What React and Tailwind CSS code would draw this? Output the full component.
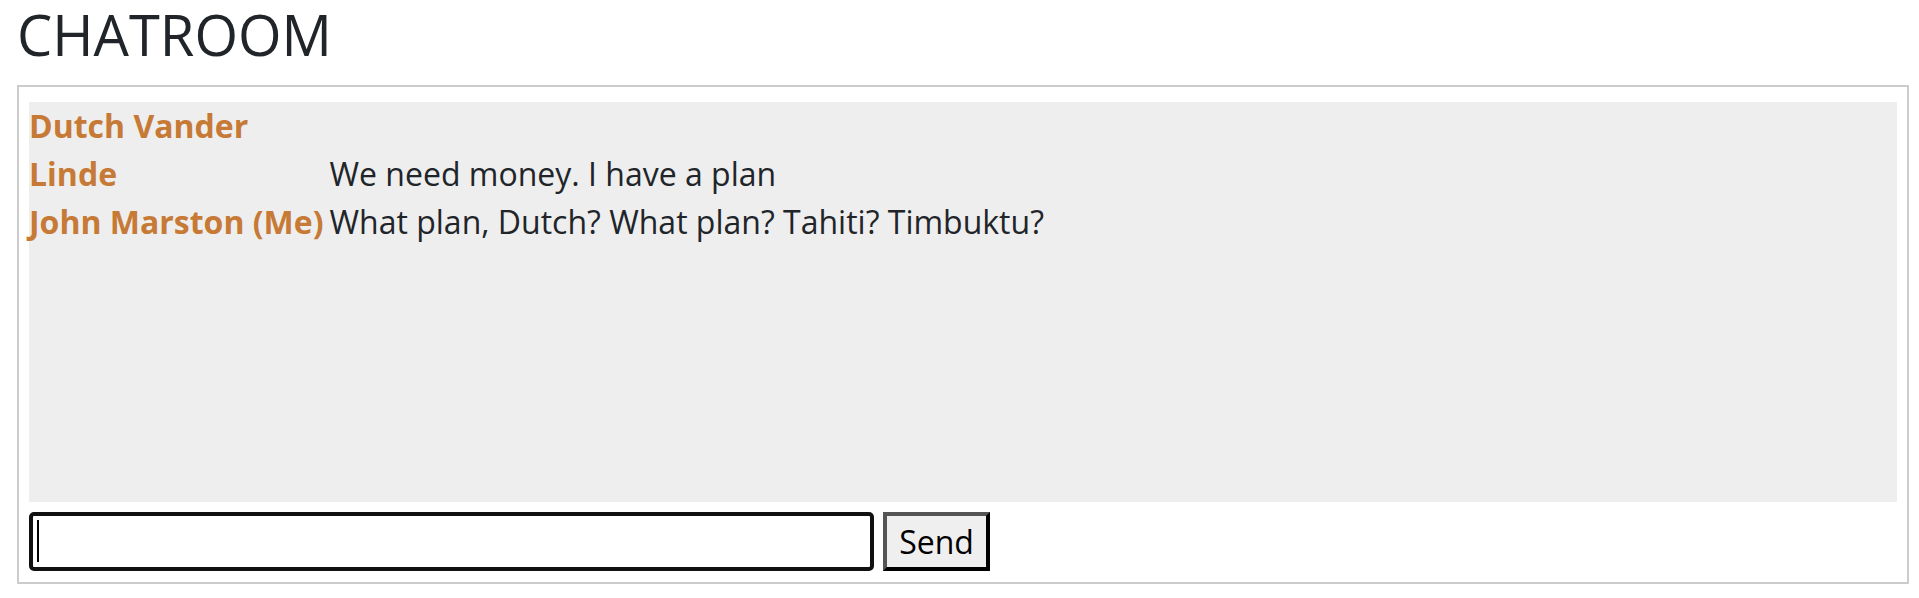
import React from "react";

const rows = [
  { name: "Dutch Vander", msg: "" },
  { name: "Linde", msg: "We need money. I have a plan" },
  { name: "John Marston (Me)", msg: "What plan, Dutch? What plan? Tahiti? Timbuktu?" },
];

export default function App() {
  return (
    <div className="min-h-[598px] bg-white pl-[17px] pr-[10px] font-['Open_Sans',sans-serif] text-[#212529]">
      <h1 className="m-0 pt-[1px] text-[56px] font-medium leading-[1.2] mb-[17px]">CHATROOM</h1>
      <div className="border-2 border-[#cccccc] px-[10px] pt-[15px] pb-[11px]">
        <div className="h-[400px] bg-[#eeeeee]">
          <div className="grid grid-cols-[auto_1fr] gap-x-[6px] text-[32px] leading-[48px]">
            {rows.map((r, i) => (
              <React.Fragment key={i}>
                <div className="font-bold text-[#c67a36] whitespace-nowrap">{r.name}</div>
                <div>{r.msg}</div>
              </React.Fragment>
            ))}
          </div>
        </div>
        <div className="mt-[10px] flex items-center gap-[9px]">
          <div className="relative">
            <input
              type="text"
              className="block h-[59px] w-[845px] rounded-[5px] border-[4px] border-[#111111] bg-white px-[5px] text-[28px] outline-none"
            />
            <div className="pointer-events-none absolute left-[8px] top-[8px] h-[42px] w-[2px] bg-black" />
          </div>
          <button className="h-[59px] w-[107px] border-[4px] border-t-[#555555] border-l-[#555555] border-b-black border-r-black bg-[#efefef] text-[32px] leading-none text-black">
            Send
          </button>
        </div>
      </div>
    </div>
  );
}
